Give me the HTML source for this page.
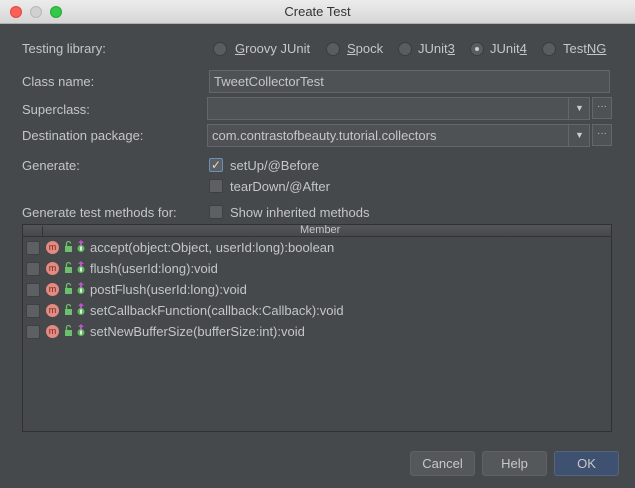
<!DOCTYPE html>
<html><head><style>
*{box-sizing:border-box;margin:0;padding:0}
body{width:635px;height:488px;background:#46494b;font-family:"Liberation Sans",sans-serif;font-size:13px;color:#c4c6c8;position:relative;overflow:hidden}
.t{position:absolute;white-space:nowrap}
.title{position:absolute;left:0;top:0;width:635px;height:24px;background:linear-gradient(#ececec,#d6d6d6);border-bottom:1px solid #b0b0b0;text-align:center;line-height:24px;color:#333;font-size:13px}
.dot{position:absolute;top:6px;width:12px;height:12px;border-radius:50%}
.radio{position:absolute;width:14px;height:14px;border-radius:50%;background:#5a5d5f;border:1px solid #3a3c3d}
.field{position:absolute;background:#4f5254;border:1px solid #646769;color:#c4c6c8;padding-left:4px;line-height:22px}
.btn2{position:absolute;width:20px;height:22px;border:1px solid #646769;background:#4f5254;color:#bbb;font-size:10px;text-align:center;line-height:18px}
.cb{position:absolute;width:14px;height:14px;border-radius:2px;background:#5d6062;border:1px solid #3e4042}
.m{position:absolute;width:13px;height:13px;border-radius:50%;background:#e48a80;color:#6b2a24;font-size:9px;text-align:center;line-height:12px}
.ic{position:absolute}
.btn{position:absolute;top:451px;height:25px;border:1px solid #5f6264;border-radius:3px;background:#55585a;color:#c8c8c8;text-align:center;line-height:23px;font-size:13px}
</style></head><body>
<div class="title">Create Test
<div class="dot" style="left:10px;background:#fc5f57;border:1px solid #df4640"></div>
<div class="dot" style="left:30px;background:#d0d0d0;border:1px solid #b8b8b8"></div>
<div class="dot" style="left:50px;background:#34c84a;border:1px solid #25a835"></div>
</div>

<div class="t" style="left:22px;top:41px">Testing library:</div>
<div class="radio" style="left:213px;top:42px"></div><div class="t" style="left:235px;top:41px"><u>G</u>roovy JUnit</div>
<div class="radio" style="left:326px;top:42px"></div><div class="t" style="left:347px;top:41px"><u>S</u>pock</div>
<div class="radio" style="left:398px;top:42px"></div><div class="t" style="left:418px;top:41px">JUnit<u>3</u></div>
<div class="radio" style="left:470px;top:42px"><div style="position:absolute;left:4px;top:4px;width:4px;height:4px;border-radius:50%;background:#ccc"></div></div><div class="t" style="left:490px;top:41px">JUnit<u>4</u></div>
<div class="radio" style="left:542px;top:42px"></div><div class="t" style="left:563px;top:41px">Test<u>NG</u></div>

<div class="t" style="left:22px;top:74px">Class name:</div>
<div class="field" style="left:209px;top:70px;width:401px;height:23px">TweetCollectorTest</div>

<div class="t" style="left:22px;top:102px">Superclass:</div>
<div class="field" style="left:207px;top:97px;width:383px;height:23px"></div>
<div class="t" style="left:568px;top:97px;width:22px;height:23px;border-left:1px solid #646769;color:#ccc;font-size:9px;text-align:center;line-height:23px">▼</div>
<div class="btn2" style="left:592px;top:97px">···</div>

<div class="t" style="left:22px;top:128px">Destination package:</div>
<div class="field" style="left:207px;top:124px;width:383px;height:23px">com.contrastofbeauty.tutorial.collectors</div>
<div class="t" style="left:568px;top:124px;width:22px;height:23px;border-left:1px solid #646769;color:#ccc;font-size:9px;text-align:center;line-height:23px">▼</div>
<div class="btn2" style="left:592px;top:124px">···</div>

<div class="t" style="left:22px;top:158px">Generate:</div>
<div class="cb" style="left:209px;top:158px;border-color:#6a8fb8;color:#ddd;font-size:12px;line-height:12px;text-align:center">✓</div><div class="t" style="left:230px;top:158px">setUp/@Before</div>
<div class="cb" style="left:209px;top:179px"></div><div class="t" style="left:230px;top:179px">tearDown/@After</div>

<div class="t" style="left:22px;top:205px">Generate test methods for:</div>
<div class="cb" style="left:209px;top:205px"></div><div class="t" style="left:230px;top:205px">Show inherited methods</div>

<div style="position:absolute;left:22px;top:224px;width:590px;height:208px;background:#46494b;border:1px solid #2f3133"></div>
<div style="position:absolute;left:23px;top:225px;width:588px;height:12px;background:linear-gradient(#535659,#46494b);border-bottom:1px solid #333"></div>
<div style="position:absolute;left:42px;top:226px;width:1px;height:11px;background:#333"></div>
<div class="t" style="left:300px;top:224px;font-size:11px;line-height:13px">Member</div>

<svg class="ic" style="left:0;top:0" width="635" height="488">
<defs>
<g id="ic">
<rect x="65" y="5" width="7" height="6" fill="#6cbf6c"/>
<path d="M66.5 5 V2.5 a2 2 0 0 1 4 0" stroke="#6cbf6c" stroke-width="1.3" fill="none"/>
<circle cx="81" cy="7.5" r="3.5" fill="#5fb85f"/>
<rect x="80.2" y="5.5" width="1.6" height="4" fill="#fff"/>
<path d="M78 2 L81 -1 L84 2 Z M80 2 h2 v2 h-2z" fill="#c050d0"/>
</g>
</defs>
<use href="#ic" y="241"/>
<use href="#ic" y="262"/>
<use href="#ic" y="283"/>
<use href="#ic" y="304"/>
<use href="#ic" y="325"/>
</svg>

<div class="cb" style="left:26px;top:241px"></div><div class="m" style="left:46px;top:241px">m</div><div class="t" style="left:90px;top:240px">accept(object:Object, userId:long):boolean</div>
<div class="cb" style="left:26px;top:262px"></div><div class="m" style="left:46px;top:262px">m</div><div class="t" style="left:90px;top:261px">flush(userId:long):void</div>
<div class="cb" style="left:26px;top:283px"></div><div class="m" style="left:46px;top:283px">m</div><div class="t" style="left:90px;top:282px">postFlush(userId:long):void</div>
<div class="cb" style="left:26px;top:304px"></div><div class="m" style="left:46px;top:304px">m</div><div class="t" style="left:90px;top:303px">setCallbackFunction(callback:Callback):void</div>
<div class="cb" style="left:26px;top:325px"></div><div class="m" style="left:46px;top:325px">m</div><div class="t" style="left:90px;top:324px">setNewBufferSize(bufferSize:int):void</div>

<div class="btn" style="left:410px;width:65px">Cancel</div>
<div class="btn" style="left:482px;width:65px">Help</div>
<div class="btn" style="left:554px;width:65px;background:#3f5170;border-color:#56657e">OK</div>
</body></html>
